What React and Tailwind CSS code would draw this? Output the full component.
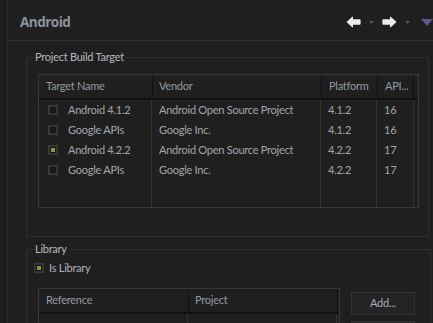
import React from "react";

function Box({ checked }) {
  return (
    <div className="w-[10px] h-[10px] shrink-0 bg-[#303030] border border-[#3a3a3a] flex items-center justify-center">
      <div
        className={
          "w-[6px] h-[6px] border border-[#151515] " +
          (checked ? "bg-[#8c9a2c]" : "bg-[#1b1b1b]")
        }
      />
    </div>
  );
}

const rows = [
  ["Android 4.1.2", "Android Open Source Project", "4.1.2", "16", false],
  ["Google APIs", "Google Inc.", "4.1.2", "16", false],
  ["Android 4.2.2", "Android Open Source Project", "4.2.2", "17", true],
  ["Google APIs", "Google Inc.", "4.2.2", "17", false],
];

const ARROW =
  "M0.5 6 L6.5 0.5 L7 0.9 L7 3.3 L13.7 3.3 Q14.6 3.3 14.6 4.3 L14.6 7.7 Q14.6 8.7 13.7 8.7 L7 8.7 L7 11.1 L6.5 11.5 Z";

function LeftArrow() {
  return (
    <svg width="15" height="12" viewBox="0 0 15 12">
      <path d={ARROW} fill="#ececec" />
    </svg>
  );
}

function RightArrow() {
  return (
    <svg width="15" height="12" viewBox="0 0 15 12" style={{ transform: "scaleX(-1)" }}>
      <path d={ARROW} fill="#ececec" />
    </svg>
  );
}

function SmallTri() {
  return (
    <svg width="5" height="3" viewBox="0 0 5 3">
      <path d="M0 0 L5 0 L2.5 3 Z" fill="#555555" />
    </svg>
  );
}

export default function App() {
  return (
    <div className="w-[433px] h-[323px] overflow-hidden bg-[#1f1f1f] flex font-['Lato',sans-serif] text-[11px] tracking-[-0.25px] text-[#a2a6ab]">
      <div className="w-[8px] shrink-0 bg-[#1c1c1c] border-r border-[#2b2b2b]" />
      <div className="flex-1 min-w-0 flex flex-col">
        {/* header */}
        <div className="h-[41px] shrink-0 border-b border-[#333333] flex items-center pl-[12px] pt-[4px]">
          <div className="font-['Open_Sans',sans-serif] font-bold text-[13.5px] tracking-[-0.5px] text-[#8b939d]">
            Android
          </div>
          <div className="ml-auto flex items-center">
            <LeftArrow />
            <div className="ml-[8px]"><SmallTri /></div>
            <div className="ml-[8px]"><RightArrow /></div>
            <div className="ml-[8px]"><SmallTri /></div>
            <svg className="ml-[11px]" width="12" height="7" viewBox="0 0 12 7">
              <path d="M0 0 L12 0 L6 7 Z" fill="#5b5788" />
            </svg>
          </div>
        </div>

        {/* body */}
        <div className="pl-[18px] flex flex-col">
          <fieldset className="mt-[9px] w-[403px] h-[187px] border border-[#2f2f2f] pl-[11px]">
            <legend className="ml-[-5px] px-[2px] leading-[14px] text-[#b4b8bc]">Project Build Target</legend>
            <div className="mt-[10px] w-[381px] h-[134px] border border-[#383838] flex flex-col">
              <div className="h-[25px] shrink-0 flex border-b-2 border-[#111111] text-[#959aa0]">
                <div className="w-[114px] border-r border-[#111111] pl-[7px] flex items-center">Target Name</div>
                <div className="w-[169px] border-r border-[#111111] pl-[6px] flex items-center">Vendor</div>
                <div className="w-[56px] border-r border-[#111111] pl-[7px] flex items-center">Platform</div>
                <div className="w-[36px] border-r border-[#111111] pl-[7px] flex items-center">API...</div>
                <div className="flex-1" />
              </div>
              <div className="flex-1 flex">
                <div className="w-[113px] border-r border-[#333333] flex flex-col">
                  {rows.map((r, i) => (
                    <div key={i} className="h-[20px] flex items-center pl-[9px]">
                      <Box checked={r[4]} />
                      <span className="ml-[10px]">{r[0]}</span>
                    </div>
                  ))}
                </div>
                <div className="w-[169px] border-r border-[#333333] flex flex-col pl-[7px]">
                  {rows.map((r, i) => (
                    <div key={i} className="h-[20px] flex items-center">{r[1]}</div>
                  ))}
                </div>
                <div className="w-[56px] border-r border-[#333333] flex flex-col pl-[7px]">
                  {rows.map((r, i) => (
                    <div key={i} className="h-[20px] flex items-center">{r[2]}</div>
                  ))}
                </div>
                <div className="w-[37px] border-r border-[#333333] flex flex-col pl-[7px]">
                  {rows.map((r, i) => (
                    <div key={i} className="h-[20px] flex items-center">{r[3]}</div>
                  ))}
                </div>
                <div className="flex-1" />
              </div>
            </div>
          </fieldset>

          <fieldset className="mt-[5px] w-[405px] h-[120px] border border-[#2f2f2f] pl-[7px]">
            <legend className="ml-[-1px] px-[2px] leading-[14px] text-[#b4b8bc]">Library</legend>
            <div className="mt-[5px] h-[14px] flex items-center">
              <Box checked />
              <span className="ml-[5px] text-[#b0b4b8]">Is Library</span>
            </div>
            <div className="mt-[13px] flex items-start pl-[4px]">
              <div className="w-[302px] h-[60px] border border-[#383838] flex flex-col">
                <div className="h-[25px] shrink-0 flex border-b-2 border-[#111111] text-[#959aa0]">
                  <div className="w-[150px] border-r border-[#111111] pl-[7px] flex items-center">Reference</div>
                  <div className="w-[149px] border-r border-[#111111] pl-[6px] flex items-center">Project</div>
                  <div className="flex-1" />
                </div>
                <div className="flex-1 flex">
                  <div className="w-[149px] border-r border-[#333333]" />
                  <div className="w-[149px] border-r border-[#333333]" />
                </div>
              </div>
              <div className="ml-[11px] mt-[4px] flex flex-col gap-[6px]">
                <div className="w-[64px] h-[23px] bg-[#232323] border border-[#333333] flex items-center justify-center text-[#a8acb0]">
                  Add...
                </div>
                <div className="w-[64px] h-[23px] bg-[#232323] border border-[#333333]" />
              </div>
            </div>
          </fieldset>
        </div>
      </div>
    </div>
  );
}
